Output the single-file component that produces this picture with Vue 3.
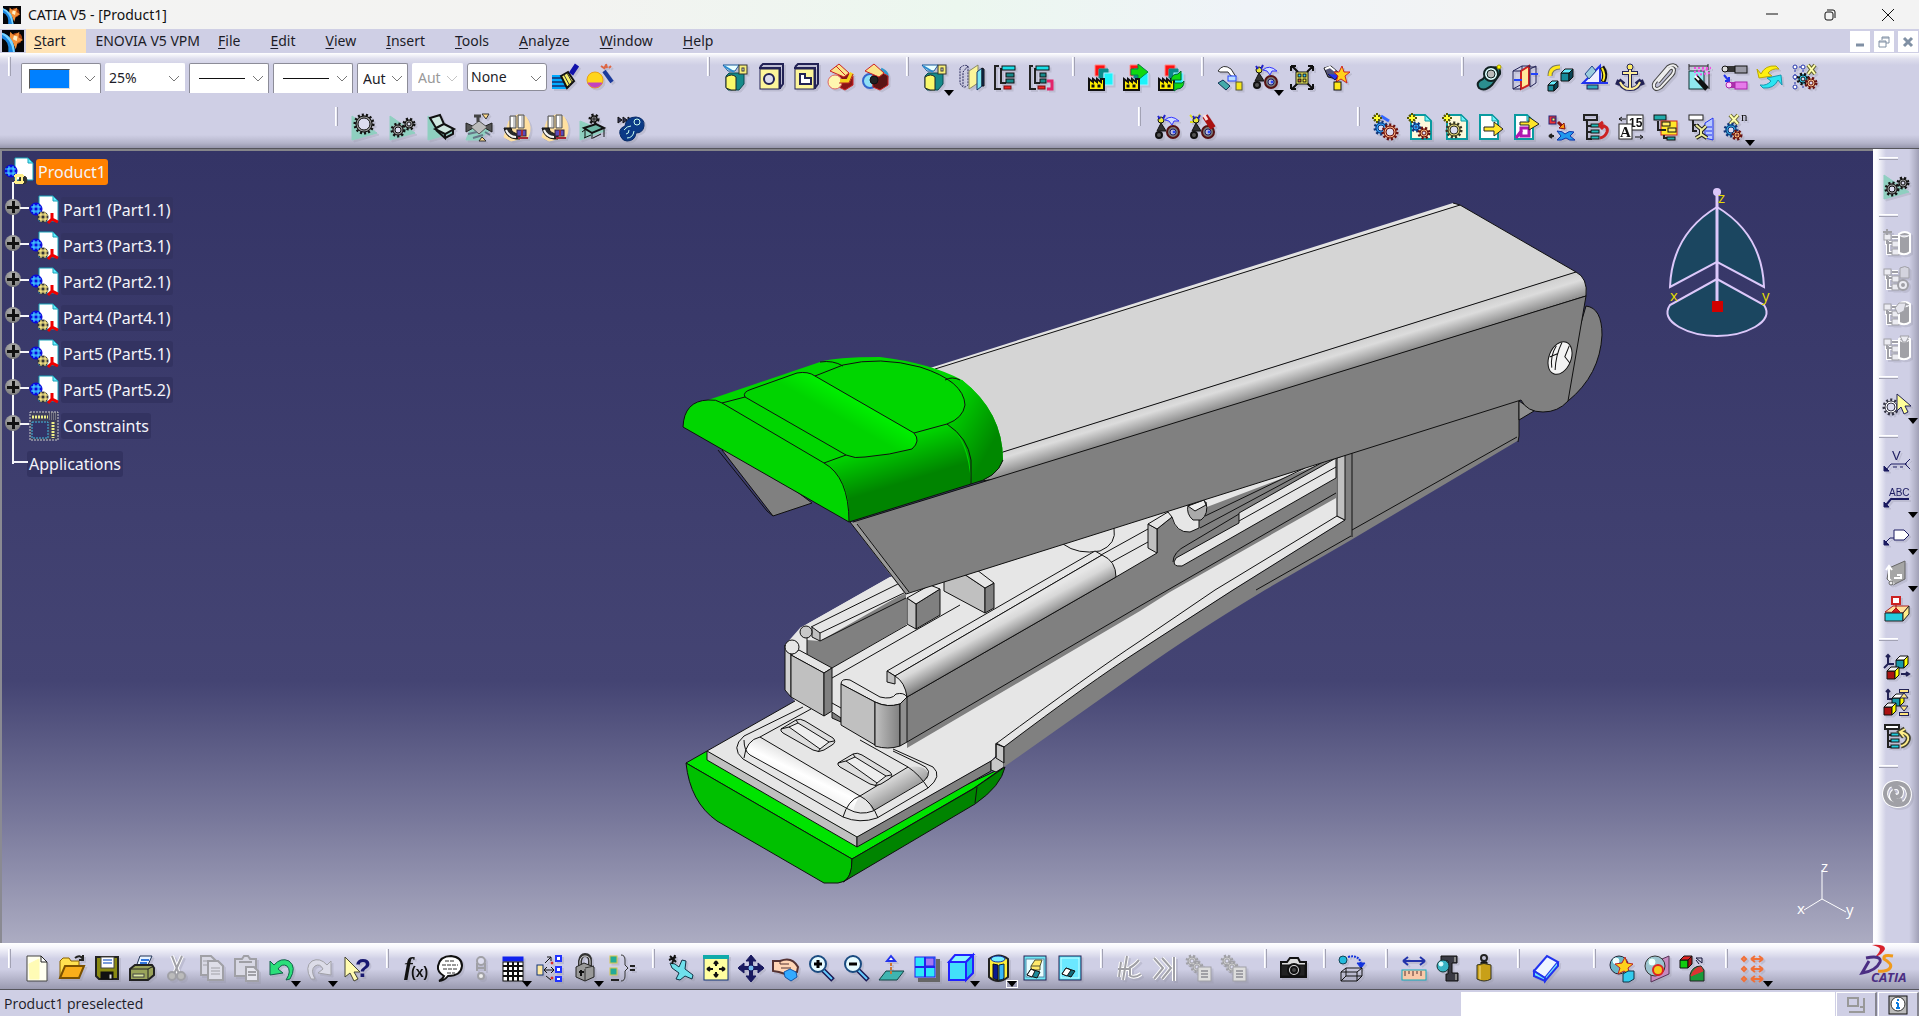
<script setup>
const P = (d, f = 'none', s = '#111', w = 1) => `<path d="${d}" fill="${f}" stroke="${s}" stroke-width="${w}"/>`
const R = (x, y, w, h, f, s = '#111') => `<rect x="${x}" y="${y}" width="${w}" height="${h}" fill="${f}" stroke="${s}"/>`
const C = (x, y, r, f, s = '#111', w = 1) => `<circle cx="${x}" cy="${y}" r="${r}" fill="${f}" stroke="${s}" stroke-width="${w}"/>`
const T = (x, y, t, size, f = '#111', extra = '') => `<text x="${x}" y="${y}" font-size="${size}" fill="${f}" ${extra}>${t}</text>`
const gear = (x, y, r, f, s = '#111') =>
  `<circle cx="${x}" cy="${y}" r="${r}" fill="${f}" stroke="${s}" stroke-width="3" stroke-dasharray="2 2"/>` +
  C(x, y, r - 1, f, s) + C(x, y, Math.max(1, r - 3), '#dcdcf0', s)
const page = (x, y, w, h, f = '#fff') =>
  P(`M${x} ${y}h${w - 6}l6 6v${h - 6}h${-w}z`, f, '#0a9aa0', 2) + P(`M${x + w - 6} ${y}v6h6z`, '#6ef0f8', '#0a9aa0')
const cube = (x, y, n, a, b, c) =>
  P(`M${x} ${y + 4}h${n}v${n}h${-n}z`, a) + P(`M${x} ${y + 4}l4 -4h${n}l-4 4z`, b) + P(`M${x + n} ${y + 4}l4 -4v${n}l-4 4z`, c)
const part = P('M4 13l3 -3h12l3 -4v15l-5 6h-11l-2 -3z', '#158a8a', '#0b4a50') + P('M4 14q6 -4 10 0v13q-5 1 -10 -2z', '#f8f86a', '#222') + P('M1 2h16l-4 6h-7z', '#eaffff', '#1a5a9a') + P('M2 3l10 6', 'none', '#2a8ad0', 2) + R(17, 2, 8, 9, '#f6ee7a', '#333') + R(20, 5, 2, 3, '#fff', '#333')
const robot = C(8, 7, 3, '#e8e838') + P('M5 3l2 3M12 2l-2 4', 'none', '#22c', 2) + P('M8 10l-4 8h9z', '#333') + C(6, 22, 3, '#555', '#111', 2) + C(20, 19, 6, '#777', '#511', 2) + C(20, 19, 3, '#bbd', '#226') + C(21, 19, 1, '#24f', '#24f')
const arm = P('M12 7q6 -6 14 1l-5 0l-2 4l-3 -4z', '#cfdcff', '#33f')
const factory = P('M2 27v-11l4 3v-3l4 3v-3l4 3v-3h3v11z', '#ffee00', '#111', 2) + R(5, 22, 2, 2, '#111') + R(11, 22, 2, 2, '#111')
const stack = P('M8 13v-11h10v4h-6v7z', '#f11', '#f88') + P('M12 15v-9h9v4h-5v5z', '#0a8a8a', '#0a8a8a') + R(17, 10, 9, 12, '#1df3fa', '#aef')
const teal = P('M1 3L26 20L1 27z', '#8fcfc0', '#8fcfc0')
const disc = '#a0a0a6'
const gboxLines = 'M4 10v4h6M9 8h6M9 16h3M5 12v12h6'
const gbox = P(gboxLines, 'none', '#fff', 4) + P(gboxLines, 'none', disc, 2) + R(1, 5, 7, 6, '#ececf2', disc) + R(9, 12, 7, 6, '#ececf2', disc) + R(9, 20, 7, 6, '#ececf2', disc)
const cyl = P('M16 5q6 -4 11 0v18q-5 4 -11 1z', disc, '#fff', 2) + P('M16 6q5 4 11 0', '#d4d4de', '#fff')
const mech = P('M7 3h6v12h-6zM15 2h6v13h-6z', '#c9c9c9', '#555') + P('M9 4v10M17 3v11', 'none', '#fff', 2) + P('M1 15q2 10 12 11h4v-5q-8 0 -9 -6z', '#2a2a2a', '#111') + P('M3 17q3 7 10 7', 'none', '#f4f4f4', 2) + R(14, 17, 9, 6, '#5a4bbb', '#323') + P('M15 25h10M19 17v6', 'none', '#a52834', 2)
const clay = P('M6 8Q14 -2 23 4Q30 14 25 24L8 28L1 24z', '#ffe0a0', '#ffe0a0')
const mag = s => P('M16 16l10 10', 'none', '#1a1a55', 5) + P('M16 16l9 9', 'none', '#6cf', 2) + C(11, 10, 8, '#e6fbff', '#1a4b80', 2) + P(s, 'none', '#000', 3)
const star = P('M5 0v10M0 5h10M2 2l6 6M8 2l-6 6', 'none', '#550', 2) + P('M5 2v6M2 5h6', 'none', '#ff3', 2)
const hooks = 'M3 15h11M6 8l-2 15M12 2l-4 24M14 14q5 -2 10 -8M14 21q5 4 12 -1M15 14v8'

const icons = {
  brush: P('M1 13h14M1 17h16M1 21h14M1 25h14', 'none', '#0af', 2) + P('M1 15h12M1 19h14M1 23h14', 'none', '#114b90', 2) + P('M10 13l7 -4l6 9l-7 7z', '#f4ee6a', '#111', 2) + P('M13 12l6 11M16 10l5 9', 'none', '#333') + P('M20 11l6 -9', 'none', '#11a', 5),
  wand: C(9, 17, 8, '#ffd51a', '#e8a018') + P('M2 20a8 8 0 0 0 14 0z', '#c343c0', '#c343c0') + P('M18 8l8 11', 'none', '#1b3a9c', 4) + P('M15 3l3 2M20 1l1 4M25 3l-2 2M18 6l2 -4', 'none', '#d64', 2),
  part, holes: R(3, 6, 19, 20, '#fdf59a', '#222255') + P('M2 5h21v21M3 4l3 -3h20v20l-3 4', 'none', '#222255', 2) + C(12, 16, 5, '#dde', '#225', 2),
  pocket: R(3, 6, 19, 20, '#fdf59a', '#222255') + P('M2 5h21v21M3 4l3 -3h20v20l-3 4', 'none', '#222255', 2) + P('M8 11h5v4h6v6h-11z', '#fff', '#225', 2),
  join: P('M10 13l9 -4l7 4v9l-8 5l-6 -3z', '#8a1515', '#c22') + C(8, 19, 7, '#fff7b0', '#d66') + P('M3 8l9 -7l10 9l-5 4z', '#fbe48a', '#c22') + P('M9 3l9 9', 'none', '#c22') + P('M13 18h8l4 -8', 'none', '#f5d21e', 4) + P('M12 20h10l4 -9', 'none', '#b22'),
  joinDark: C(8, 18, 7, '#8fe0f5', '#36c', 2) + P('M19 6q9 4 5 12', 'none', '#39c', 3) + P('M10 13l9 -4l7 4v9l-8 5l-7 -3z', '#5a1515', '#c22') + P('M3 8l9 -7l10 9l-5 4z', '#fbe48a', '#c22') + C(12, 17, 4, '#222'),
  mirror: P('M2 5q4 -4 8 -2v19q-5 5 -8 -2zM10 3l-5 6v14', 'none', '#225', '1" stroke-dasharray="2 1') + P('M11 8l9 -6v18l-9 6z', '#fbf59a', '#886') + P('M19 9l5 -4v18l-5 4z', '#7fe6f2', '#136') + P('M24 5l2 1v17l-2 0z', '#136'),
  tree: P('M6 3h-4v23h6M8 5v15h5', 'none', '#222', 2) + R(9, 3, 13, 4, '#1ae0ea') + R(13, 10, 8, 4, '#168a8a') + R(13, 16, 8, 4, '#168a8a') + R(11, 23, 7, 3, '#e22', '#711'),
  treeRed: P('M5 3h-3v23h6M7 5v15h5', 'none', '#222', 2) + R(8, 3, 13, 4, '#1ae0ea') + R(12, 10, 6, 4, '#168a8a') + R(12, 16, 6, 4, '#168a8a') + R(10, 23, 7, 3, '#e22', '#711') + P('M19 18h5v8h-5', 'none', '#e3246a', 3),
  fab: stack + factory, fabArrow: stack + P('M9 6h7v-5l10 8l-10 8v-5h-7z', '#10d810', '#084') + factory,
  fabSync: stack + factory + P('M14 18q0 -7 7 -7l3 -3v9h-8zM27 18q0 8 -7 8l-3 2v-8h8z', '#12d812', '#063'),
  copyPart: P('M2 8q5 -8 13 -2l5 8l-5 -1l-3 -4l-8 0z', '#fff', '#333') + R(12, 13, 8, 5, '#bdf', '#24f') + P('M2 20l5 -3l7 6l-4 4z', '#4aa', '#135') + R(20, 19, 6, 8, '#f5e71a', '#553'),
  robot: arm + robot, explode: P('M4 3l6 6M25 3l-6 6M4 26l6 -6M25 26l-6 -6M3 3h5M3 3v5M25 3h-5M25 3v5M3 26h5M3 26v-5M25 26h-5M25 26v-5', 'none', '#111', 2) + R(8, 9, 12, 12, '#ff6', '#111') + R(10, 11, 3, 3, '#3cf') + R(15, 11, 3, 3, '#3cf') + R(10, 16, 3, 3, '#c63') + R(15, 16, 3, 3, '#fe3'),
  sparkPart: P('M1 5l7 -2l9 8l-3 5l-9 -2z', '#555577', '#111') + P('M2 6l5 -2l5 4', 'none', '#fff', 2) + P('M5 11l7 6l4 -5', '#23e', '#115') + P('M19 3l2 6h6l-5 4l2 7l-6 -4l-5 3l2 -6l-4 -4h5z', '#ffd21a', '#c22') + R(11, 19, 7, 8, '#ffe81a'),
  coincid: P('M3 25q-4 -6 4 -9l9 -11q9 -3 8 6l-8 11q-7 7 -13 3z', '#2b8f8f', '#122', 2) + C(15, 11, 7, '#dff', '#122', 2) + C(15, 11, 4, '#bbb', '#122') + C(23, 4, 2, '#ff0', '#a90'),
  contact: P('M2 8l9 -5v18l-9 5z', 'none', '#225') + P('M10 8l8 -5v19l-8 4z', '#ffe89a', '#c22', 2) + P('M19 6l6 -3v17l-6 4zM2 8h8M11 3h9M18 4h7M2 26h8', 'none', '#225') + P('M3 17h8M20 11h7', 'none', '#24f', 2),
  offset: cube(15, 6, 8, '#168a9a', '#6ef', '#0a4455') + cube(2, 18, 6, '#168a9a', '#6ef', '#0a4455') + P('M4 13q0 -9 10 -9', 'none', '#776', 5) + P('M4 13q0 -9 10 -9', 'none', '#ffe81a', 3),
  angle: P('M2 20L19 3v17z', '#eef', '#23e', 2) + P('M4 11l7 -8l4 5l-7 8z', '#9cd', '#248') + R(6, 22, 11, 4, '#3ab', '#225') + P('M21 4q5 7 1 15', 'none', '#111', 5) + P('M21 5q4 7 1 13', 'none', '#fe2', 2) + P('M1 20h26', 'none', '#23e', 2),
  anchor: C(14, 4, 3, '#fe6', '#225') + P('M14 7v18M6 10h16M3 17q2 9 11 9q9 0 11 -9M3 17l-2 5M3 17l5 4M25 17l2 5M25 17l-5 4', 'none', '#225', 4) + P('M14 7v18M7 10h14M4 19q3 7 10 7q7 0 10 -7', 'none', '#fe9', 2),
  clip: P('M7 19L18 6q4 -3 5 1q0 3 -2 5L10 24q-5 4 -7 0q-1 -3 2 -6L17 4q6 -4 9 1', 'none', '#444', 4) + P('M7 19L18 6q4 -3 5 1q0 3 -2 5L10 24q-5 4 -7 0q-1 -3 2 -6L17 4q6 -4 9 1', 'none', '#eee', 2),
  quick: P('M3 3h19M3 1v6M22 1v6M23 8v18', 'none', '#222') + R(3, 8, 15, 18, '#8fe8f0', '#133') + P('M8 9l16 -3M10 12l14 -2M8 5h17', 'none', '#f050e0', '2" stroke-dasharray="2 2') + P('M10 14l11 12', 'none', '#111', 5) + P('M9 13l4 4', 'none', '#fff', 2),
  flexible: P('M4 6h20', 'none', '#333', 6) + R(14, 3, 12, 7, '#9a9aa6') + C(4, 6, 3, '#ddd') + P('M3 12l5 6M8 14v4h-4', 'none', '#23e', 2) + P('M9 22h16', 'none', '#a3a', 6) + R(14, 19, 12, 7, '#e67aea', '#a2a') + C(8, 22, 3, '#fcf', '#a2a'),
  change: P('M5 11q4 -9 15 -8l3 3q-7 -1 -11 4l4 3l-13 2l-2 -9z', '#fff010', '#b9a800') + P('M22 17q-4 9 -15 8l-3 -3q7 1 11 -4l-4 -3l14 -3l1 10z', '#2be6f2', '#1597b0'),
  reuse: `<path d="M4 3v22M12 3v22M4 4h8M4 14h8" stroke="#23a" stroke-dasharray="2 2"/>` + C(4, 4, 2, '#fff', '#23a') + C(12, 4, 2, '#fff', '#23a') + C(4, 14, 2, '#fff', '#23a') + C(4, 24, 2, '#fff', '#23a') + P('M17 2l7 9M24 2l-7 9', 'none', '#663', 4) + P('M17 2l7 9M24 2l-7 9', 'none', '#ffa', 2) + gear(12, 16, 5, '#3ce') + gear(20, 20, 5, '#f9c890', '#611'),
  gear1: teal + gear(13, 11, 9, '#999'), gear2: teal + gear(9, 17, 6, '#999') + gear(20, 11, 5, '#999'),
  chair: teal + P('M3 5l10 -3l4 9l-8 4zM8 16l9 -5l10 5l-9 5z', '#cfe8e0', '#111', 2) + P('M9 17l9 8v-5M18 25l8 -4v-4', 'none', '#111', 2),
  valve: P('M6 14l20 2L14 27H1z', '#8fcfc0', '#8fcfc0') + P('M1 10v9l9 -5zM27 10v9l-9 -5z', '#555', '#222') + P('M6 14l8 -6l8 6l-8 7z', '#bbb', '#555') + P('M13 9v-6h-4M13 3h3', 'none', '#444', 3) + P('M17 1h7l-3 5zM14 28l3 -4l4 4z', '#ffd98a', '#333') + P('M3 21l9 -2M8 25l10 -3M20 19l5 3', 'none', '#678', 2),
  simA: clay + mech, simB: clay + mech,
  bench: P('M1 8L26 18L1 27z', '#8fcfc0', '#8fcfc0') + P('M5 15l12 -4l8 4l-12 5z', '#6db8a6', '#111', 2) + P('M6 16v9M13 20v6M25 15v9M5 25l7 -3M14 25l8 -4M3 19l4 -3', 'none', '#111') + gear(15, 6, 4, '#777'),
  fish: P('M1 4l4 3l-4 3zM6 4l4 3l-4 3zM11 4l4 3l-4 3z', '#335') + P('M4 24q-4 -8 4 -11q1 -9 11 -9q9 1 8 9q-1 7 -8 7q-1 8 -9 8q-4 0 -6 -4z', '#0b3a86', '#072a66') + C(20, 9, 3, '#0b3a86', '#cfe') + P('M7 17q3 -4 7 -4M17 18q-1 7 -7 7M12 17q0 4 -3 4', 'none', '#cfe', 1),
  robotX: P('M2 2l3 3M2 9h4M12 1l-2 3', 'none', '#dd2', 2) + robot + P('M17 3l8 12', 'none', '#a11', 6) + P('M16 2l3 5', 'none', '#fdd', 3),
  addGear: P('M9 3l8 5', 'none', '#36f', 3) + gear(9, 15, 6, '#3af', '#137') + gear(18, 19, 7, '#f9a878', '#611') + star,
  newPage: page(4, 2, 20, 24, '#fdf9dc') + gear(9, 14, 4, '#3af', '#137') + gear(17, 20, 5, '#f9b878', '#611') + star,
  gearPage: page(5, 2, 20, 24, '#fdf9dc') + gear(12, 17, 7, '#d8cc70', '#332') + star,
  pageArrow: page(3, 2, 18, 24) + P('M7 14h10v-5l9 7l-9 7v-5h-10z', '#ffe62a', '#222'),
  pagePin: page(3, 2, 18, 24) + P('M4 25l6 -8M9 15v8h8v-8z', 'none', '#b018b0', 3) + P('M8 9h9v-5l10 7l-10 6v-5h-9z', '#ffe62a', '#222'),
  replace: R(2, 3, 7, 8, '#e33', '#227') + R(5, 5, 3, 3, '#ff6', '#227') + P('M11 9l6 6', 'none', '#811', 3) + P('M18 16l-6 -1l5 -5z', '#f91', '#811') + P('M10 18q6 0 8 3q4 -4 9 -2l-4 4l5 4q-6 1 -9 -2q-5 3 -9 2l4 -4z', '#29e', '#13a') + P('M2 23h5M2 23l3 -2M2 23l3 2', 'none', '#222', 2),
  reorder: P('M2 2h13v5h-13zM5 7v19h5M5 13h5M5 19h5', 'none', '#222', 2) + R(9, 11, 8, 3, '#2bb') + R(9, 17, 8, 3, '#2bb') + R(9, 23, 8, 3, '#2bb') + P('M18 12q9 1 7 7q-2 5 -7 6M17 12l4 -3M17 12l4 4', 'none', '#c22', 3),
  number: R(10, 2, 16, 15, '#fff', '#222') + T(12, 14, '15', 12, '#111', 'font-weight="700"') + R(2, 11, 13, 15, '#fff', '#222') + T(3, 24, 'A', 15, '#111', 'font-family="Liberation Serif, serif" font-weight="700"') + P('M2 6h7M5 4l-3 2l3 2M18 24h7M23 22l3 2l-3 2', 'none', '#111', 1),
  graphTree: R(2, 2, 12, 5, '#2aa') + R(9, 8, 16, 14, '#ffe82a', '#c22') + P('M6 8v9h8M12 22v3h4', 'none', '#222', 2) + R(10, 9, 8, 4, '#fe6') + R(16, 15, 8, 4, '#fe6') + R(15, 24, 8, 3, '#2aa'),
  manage: P('M18 10l8 -5v22l-8 -2z', '#b7c8ff', '#23e') + P('M19 14h6M19 18h6M19 22h6', 'none', '#23e') + R(2, 2, 14, 5, '#fff', '#222') + P('M6 7v11h4M6 12h6', 'none', '#222', 2) + P('M9 12l6 5l4 -4M14 16v6l-5 3M14 21l6 4', 'none', '#222', 4) + P('M9 12l6 5l4 -4M14 16v6l-5 3M14 21l6 4', 'none', '#ee9', 2),
  xn: P('M8 2l8 9M16 2l-8 9', 'none', '#663', 4) + P('M8 2l8 9M16 2l-8 9', 'none', '#ffa', 2) + T(19, 8, 'n', 13, '#111', 'font-family="Liberation Serif, serif"') + gear(9, 17, 6, '#3ad', '#137') + gear(15, 22, 4, '#f9b878', '#611'),
  newFile: P('M4 2h14l6 6v19h-20z', '#fffff0', '#444') + P('M18 2v6h6z', '#fff', '#222') + P('M6 10l10 -5v20h-9z', '#fffbb5', '#fffbb5'),
  open: P('M2 24v-17l3 -3h6l2 3h8v4', '#ffe050', '#8a6000') + P('M2 24l5 -12h19l-5 12z', '#f9ae1a', '#7a5000', 2) + P('M17 4q5 -4 8 1M25 1v5h-4', 'none', '#222', 2),
  save: P('M3 3h22v22h-19l-3 -3z', '#8a8a12', '#222', 2) + R(8, 3, 13, 11, '#fff', '#444') + P('M10 6h9M10 9h9', 'none', '#7a9cdc', 2) + R(8, 18, 12, 7, '#111') + R(16, 20, 3, 5, '#ddd'),
  print: P('M8 13l4 -11h12l-5 11z', '#e6f2ff', '#235') + P('M13 6h8M12 9h7', 'none', '#37d', 2) + P('M2 15l5 -4h17l2 3v7l-6 5h-18z', '#9aa35a', '#222', 2) + P('M2 15h18v10M20 15l6 -3', 'none', '#222') + R(5, 20, 11, 3, '#dde8a0', '#444'),
  cut: P('M9 2l7 18M19 2l-8 18', 'none', '#fff', 4) + P('M9 2l7 18M19 2l-8 18', 'none', disc, 2) + C(9, 22, 4, '#bbb', disc, 2) + C(18, 22, 4, '#bbb', disc, 2),
  copy: P('M3 2h10l5 5v14h-15z', '#d8d8e4', disc, 2) + P('M10 7h10l5 5v14h-15z', '#dedee8', disc, 2) + P('M13 14h9M13 17h9M13 20h9M5 7h6M5 11h5', 'none', disc),
  paste: P('M2 5h7l2 -3h4l2 3h6v17h-21z', '#d8d8e4', disc, 2) + P('M13 13h8l4 4v10h-12z', '#e6e6ee', disc, 2) + P('M15 18h8M15 21h8M6 8h13', 'none', disc, 2),
  undo: P('M2 21V7l4 4q7 -8 15 -4q8 6 1 18l-4 1q6 -9 1 -14q-5 -3 -9 3l5 4z', '#2adf7a', '#13604a'),
  redo: P('M26 21V7l-4 4q-7 -8 -15 -4q-8 6 -1 18h4q-5 -9 0 -13q5 -3 8 3l-5 4z', '#dcdce8', disc),
  help: P('M3 3v20l5 -4l4 8l4 -2l-4 -7h6z', '#fffbb0', '#443') + T(13, 23, '?', 26, '#181870', 'font-weight="700"'),
  fx: T(3, 21, 'f', 26, '#111', 'font-family="Liberation Serif, serif" font-style="italic" font-weight="700"') + T(10, 23, '(x)', 14, '#111', 'font-weight="700"'),
  talk: P('M8 22q-7 -4 -6 -10q2 -10 13 -10q11 1 11 10q-1 10 -14 10q-4 5 -9 5q3 -1 5 -5z', '#fff', '#111', 2) + P('M9 7h10M6 11h16M7 15h14M11 19h8', 'none', '#333', '1" stroke-dasharray="4 1'),
  link: C(14, 7, 4, '#dde', disc, 2) + P('M10 9v8M18 9v8M10 14h8', 'none', disc, 2) + C(14, 22, 3, '#eee', disc, 2),
  table: R(4, 3, 20, 4, '#12e', '#12e') + R(4, 8, 20, 19, '#fff') + P('M4 12h20M4 17h20M4 22h20M9 8v19M14 8v19M19 8v19', 'none', '#111', 2),
  config: R(1, 11, 6, 10, '#ffe9a0', '#137') + P('M8 16h10M8 16l3 -3M8 16l3 3M18 16l-3 -3M18 16l-3 3M9 9l6 -6M15 3h-4M15 3v4M10 22l5 4', 'none', '#111', 1) + P('M20 2h5v5h-5zM20 13h5v5h-5zM20 23h5v4h-5z', '#fff', '#23f', 2) + C(16, 9, 1, '#d22', '#d22') + C(16, 24, 1, '#d22', '#d22'),
  lock: P('M9 12v-5q1 -6 5 -6q5 0 5 6v5', 'none', '#333', 4) + P('M9 12v-5q1 -5 5 -5q5 0 5 5v5', 'none', '#ddd', 1) + P('M5 13l8 -4l10 4v10l-9 4l-9 -4z', '#999', '#222') + P('M14 27v-12M14 14l9 -2', 'none', '#333') + P('M8 18h5M10 16v6', 'none', '#111', 2),
  equiv: R(2, 2, 7, 7, '#2a9', '#d6c84a') + R(2, 14, 7, 7, '#2a9', '#d6c84a') + P('M13 1q4 0 4 5v5l3 3l-3 3v5q0 5 -4 5', 'none', '#333') + P('M22 12h5M22 16h5M3 26h8', 'none', '#222', 2),
  plane: P('M3 9l5 1l4 3l3 -7l4 1l-1 8l8 6l-1 4l-7 -3l-5 4l-4 -1l3 -6l-7 -5z', '#6fe0ec', '#134') + P('M2 6l7 -3M3 2l6 6M8 1l-3 9', 'none', '#111', 2),
  fit: R(2, 3, 24, 23, '#ffffa0', '#137') + P('M1 3h26', 'none', '#1aa', 4) + P('M14 7v5M14 18v5M5 15h6M17 15h6M14 7l-2 3M14 7l2 3M14 23l-2 -3M14 23l2 -3M5 15l3 -2M5 15l3 2M23 15l-3 -2M23 15l-3 2', 'none', '#111', 2),
  pan: P('M14 3v23M2 14h24', 'none', '#1a1a60', 4) + P('M14 1l5 6h-10zM14 28l5 -6h-10zM1 14l6 -5v10zM27 14l-6 -5v10z', '#1a1a60', '#1a1a60') + C(14, 14, 3, '#7be', '#1a1a60'),
  rotate: P('M1 7h7q12 -5 18 6l-1 5l-9 3l-9 -3l-6 -1z', '#ffd5b5', '#533', 2) + P('M8 10h9M9 14h10M8 6v4', 'none', '#533') + P('M12 18l6 -3l6 3l1 5l-6 4l-6 -4z', '#3af', '#15a'),
  zoomIn: mag('M7 10h8M11 6v8'), zoomOut: mag('M7 10h8'),
  normal: P('M2 26l7 -9h18l-7 9z', '#3fb5b0', '#144') + P('M14 20v-13', 'none', '#c73', '2" stroke-dasharray="3 1') + P('M14 2l4 5h-8z', '#fff', '#23e', 2),
  multi: P('M6 26h20v-21', 'none', '#666', 4) + R(3, 3, 20, 20, '#2ee8fa', '#22e') + R(13, 4, 9, 8, '#a47af0', '#22e') + P('M13 3v20M3 13h20', 'none', '#22e', 2),
  iso: P('M2 8h17v18h-17z', '#42e0fa', '#22f', 2) + P('M2 8l6 -7h18l-7 7z', '#8af4ff', '#22f', 2) + P('M19 8l7 -7v18l-7 7z', '#20bde8', '#22f', 2),
  shading: P('M5 5v18q9 8 19 0v-18q-9 -7 -19 0z', '#ffee3a', '#222', 2) + P('M9 10v14q3 2 5 2v-15z', '#0a1a90', '#111') + P('M15 11v15q4 0 5 -2v-14z', '#38b8f8', '#024') + '<ellipse cx="14" cy="5" rx="7" ry="3" fill="#7ef" stroke="#13a"/>',
  hide: R(3, 2, 22, 24, '#6fe9f5', '#225') + R(5, 5, 18, 18, '#e8ffff', '#58a') + P('M10 12l4 -6h7l-2 6zM10 12v4h9v-4', '#ffe96a', '#553') + P('M6 21l4 -6l9 3l-3 6z', '#1b8a9a', '#111') + P('M6 21l4 -6l4 2l-3 6z', '#fff', '#111'),
  swap: R(3, 2, 22, 24, '#52e3fa', '#225') + R(5, 4, 18, 20, '#6be8ff', '#cff') + P('M6 20l4 -6l9 3l-4 6z', '#136a7a', '#111') + P('M6 20l4 -6l5 2l-4 6z', '#fff', '#111'),
  dis1: P(hooks, 'none', '#fff', 4) + P(hooks, 'none', disc, 2),
  dis2: P('M4 4l9 10l-9 11M12 4l9 10l-9 11M24 3v24', 'none', '#fff', 4) + P('M4 4l9 10l-9 11M12 4l9 10l-9 11M24 3v24', 'none', disc, 2),
  dis3: gear(7, 7, 5, '#ccc', disc) + gear(12, 13, 5, '#ccc', disc) + R(13, 13, 13, 14, '#ddd', disc) + P('M16 17h7M16 20h7M16 23h7', 'none', disc, 2),
  camera: P('M2 8h6l3 -4h8l2 4h6v15h-25z', '#ddd', '#111', 2) + R(2, 11, 24, 11, '#222') + C(15, 16, 6, '#ddd', '#111', 2) + C(15, 16, 3, '#444', '#111', 2),
  orbit: C(5, 6, 4, '#2bd', '#145') + P('M10 3q12 -3 13 8', 'none', '#13d', '2" stroke-dasharray="2 1') + P('M19 9h8l-4 5z', '#13d', '#13d') + P('M3 18l5 -4h16v8l-5 5h-16zM3 18h16v9M19 18l5 -4M8 14v8h16M8 22l-5 5', 'none', '#111', 1),
  measure: P('M3 7h22M3 7l5 -4M3 7l5 4M25 7l-5 -4M25 7l-5 4', 'none', '#23a', 2) + R(2, 16, 24, 10, '#f9c9a8', '#1ab') + P('M5 17v5M9 17v3M13 17v5M17 17v3M21 17v5', 'none', '#533', 1),
  caliper: P('M6 2h16v7h-5v10h6v8h-12v-7h2v-13h-7z', '#3a3a44', '#111') + P('M20 3v5M21 20v6', 'none', '#888', 2) + C(8, 12, 6, '#37b4c4', '#133') + C(6, 10, 2, '#dff', '#dff'),
  weight: C(14, 4, 3, 'none', '#222', 2) + P('M11 8h6v3h-6z', '#222') + P('M7 11q7 -3 14 0v14q-7 4 -14 0z', '#c8a018', '#332', 1) + P('M10 12v13', 'none', '#e0c050', 2),
  eraser: P('M2 17L15 2l11 6L13 24z', '#eef6ff', '#23e', 2) + P('M2 17v5l11 5v-3zM13 24v3L26 12v-4', '#6fe8f8', '#23e', 2),
  ballSpark: C(11, 11, 9, '#6bb8c8', '#223') + C(8, 7, 3, '#eff', '#eff') + P('M17 3l2 6l6 1l-5 4l2 7l-6 -4l-6 3l2 -6l-5 -4l7 -1z', '#ffd21a', '#b22') + P('M15 20l5 -3h6v8l-5 3h-6z', '#3ce', '#134'),
  ballPlane: P('M12 8l14 -6v18l-18 8v-8z', '#c78ac0', '#535') + C(12, 12, 10, '#9cc4d0', '#333') + C(9, 8, 4, '#eff', '#9cc') + C(15, 16, 5, '#f5c81a', '#d22', 2),
  cubes: cube(2, 2, 8, '#1c1', '#d22', '#a11') + P('M18 4h6v5M24 9l-6 -5M18 6l3 4', 'none', '#113', 1) + P('M12 27v-6q2 -9 11 -9l3 4v11z', '#1a9a3a', '#222') + P('M13 22q3 -9 10 -9l2 4z', '#d33', '#d33'),
  pattern: [5, 15, 25].map(y => P(`M2 ${y}l2 -2l2 2l-2 2zM11 ${y}h12M11 ${y}l4 -3M11 ${y}l4 3M23 ${y}l-4 -3M23 ${y}l-4 3`, 'none', '#f07038', 2)).join(''),
  tree1: gbox + cyl + P('M4 0v6M0 3h9', 'none', disc, 2), tree2: gbox + P('M17 4q5 -3 9 0v10h-9z', '#d4d4de', disc) + C(20, 21, 5, '#ececf2', disc, 2) + C(20, 21, 1, disc, disc, 2),
  tree3: gbox + cyl + P('M12 9l4 -5h7l-2 8l-6 3z', '#e4e4ec', disc), tree4: gbox + cyl + P('M17 2h9l-3 6h-3z', '#ececf2', disc),
  select: gear(8, 16, 7, '#fff', '#334') + P('M14 3v17l4 -4l3 7l4 -2l-3 -6h6z', '#ffff9a', '#225'),
  weld: T(9, 10, 'V', 13, '#1a1a60') + P('M3 20l5 -6h16M10 17h4M17 17h3M27 9l-5 5l5 5', 'none', '#1a1a60') + P('M1 16v5h5z', '#1a1a60', '#1a1a60'),
  abc: T(6, 11, 'ABC', 10, '#1a1a60') + P('M3 20l5 -6h18', 'none', '#1a1a60', 2) + P('M1 17v5h5z', '#1a1a60', '#1a1a60'),
  flag: P('M11 8h10l5 5l-5 5h-10z', '#fff', '#1a1a60') + P('M3 20l4 -4h4', 'none', '#1a1a60') + P('M1 18v5h5z', '#1a1a60', '#1a1a60'),
  view3d: P('M6 9l16 -7v18l-12 6l-6 -6z', '#a6a6a6', '#666') + P('M6 8v12l5 5M3 11l3 -4l3 4M11 19h7M14 16h4v4', 'none', '#fff', 2) + C(8, 24, 2, '#eee', '#666'),
  block: P('M2 16l8 -6h16l-6 7z', '#ffdf9a', '#a22') + P('M2 17h18v8h-18z', '#2cd', '#222') + P('M20 17l6 -7v8l-6 7z', '#fe8', '#222') + P('M9 1h8v7h-8z', '#fff', '#c22', 2) + P('M13 9v3l-4 4h8l-4 -4', '#c22', '#a11'),
  axisCube: P('M5 2v9h6M5 11l-4 4M3 4l2 -2l2 2', 'none', '#225', 2) + cube(13, 3, 8, '#1899a8', '#fff', '#ff0') + cube(4, 14, 8, '#a11', '#eee', '#ff0') + P('M18 21h7M23 19l3 2l-3 2', 'none', '#225', 2),
  stackCube: P('M5 2v9h6M3 4l2 -2l2 2', 'none', '#225', 2) + cube(9, 6, 8, '#1899a8', '#fff', '#ff0') + cube(1, 15, 8, '#a11', '#eee', '#ff0') + P('M16 3h10M16 26h10', 'none', '#225', 4) + P('M17 3h8M17 26h8', 'none', '#ffe680', 2) + P('M21 5l4 5h-8zM21 23l4 -5h-8z', '#ffe680', '#225'),
  reorder2: P('M2 2h14v4h-14z', '#fff', '#222', 2) + P('M5 6v18h5M5 12h5M5 18h5', 'none', '#222', 2) + R(8, 10, 8, 3, '#2cd') + R(8, 16, 8, 3, '#2cd') + R(8, 22, 8, 3, '#2cd') + P('M18 9q9 3 7 8q-2 5 -7 6M22 6l-5 3l4 5', 'none', '#443', 5) + P('M18 9q9 3 7 8q-2 5 -7 6M22 6l-5 3l4 5', 'none', '#fe8', 2),
  spiral: P('M9 8q8 -3 9 4q0 5 -5 5q-3 -1 -2 -4M2 15q0 -12 12 -12q11 1 12 11M19 20q-9 3 -10 -4q0 -3 3 -5M26 13q0 12 -12 12q-11 -1 -12 -11', 'none', '#fff', 6) + P('M9 8q8 -3 9 4q0 5 -5 5q-3 -1 -2 -4M2 15q0 -12 12 -12q11 1 12 11M19 20q-9 3 -10 -4q0 -3 3 -5M26 13q0 12 -12 12q-11 -1 -12 -11', 'none', disc, 4)
}

const topGroups = [
  { items: ['part', 'holes', 'pocket', 'join', 'joinDark'], cls: 'lead' },
  { items: ['part+', 'mirror', 'tree', 'treeRed'] },
  { items: ['fab', 'fabArrow', 'fabSync'] },
  { items: ['copyPart', 'robot+', 'explode', 'sparkPart'] },
  { items: ['coincid', 'contact', 'offset', 'angle', 'anchor', 'clip', 'quick', 'flexible', 'change', 'reuse'], cls: 'constraints' }
]
const secondGroups = [
  { items: ['gear1', 'gear2', 'chair', 'valve', 'simA', 'simB', 'bench', 'fish'], cls: 'workbenches' },
  { items: ['robot', 'robotX'], cls: 'simulate' },
  { items: ['addGear', 'newPage', 'gearPage', 'pageArrow', 'pagePin', 'replace', 'reorder', 'number', 'graphTree', 'manage', 'xn+'], cls: 'structure' }
]
const bottomGroups = [
  { items: ['newFile', 'open', 'save', 'print', 'cut', 'copy', 'paste', 'undo+', 'redo+', 'help'], cls: 'first' },
  { items: ['fx', 'talk', 'link', 'table+', 'config', 'lock+', 'equiv'] },
  { items: ['plane', 'fit', 'pan', 'rotate', 'zoomIn', 'zoomOut', 'normal', 'multi', 'iso+', 'shading+', 'hide', 'swap'] },
  { items: ['dis1', 'dis2', 'dis3', 'dis3'] },
  { items: ['camera'] },
  { items: ['orbit'] },
  { items: ['measure', 'caliper', 'weight'], cls: 'loose' },
  { items: ['eraser'], cls: 'loose' },
  { items: ['ballSpark', 'ballPlane', 'cubes'], cls: 'far' },
  { items: ['pattern+'], cls: 'loose' }
]
const sideGroups = [
  ['gear2'], ['tree1', 'tree2', 'tree3', 'tree4'], ['select+'],
  ['weld', 'abc+', 'flag+', 'view3d+', 'block'], ['axisCube', 'stackCube', 'reorder2'], ['spiral']
]
const key = n => n.replace('+', '')
const menus = ['File', 'Edit', 'View', 'Insert', 'Tools', 'Analyze', 'Window', 'Help']
const parts = ['Part1 (Part1.1)', 'Part3 (Part3.1)', 'Part2 (Part2.1)', 'Part4 (Part4.1)', 'Part5 (Part5.1)', 'Part5 (Part5.2)']
const appIcon = '<rect width="24" height="24" fill="#050508"/><circle cx="16" cy="9" r="6" fill="#a8400c"/><path d="M9 2l4 4l6 -4l-1 6l5 3l-6 3l-2 7l-3 -7l-4 -4z" fill="#f59038"/><path d="M13 6l4 1l-1 5l-4 -2z" fill="#fff0c8"/><path d="M0 3Q13 7 14 24H7Q8 12 0 9z" fill="#1a86e0"/><path d="M0 3Q13 7 14 24H12Q10 10 0 5z" fill="#7ad4ff"/>'
const blueCog = C(7, 14, 6, '#0808e0', '#0808e0') + P('M4 11h6v6h-6zM2 12h10M2 16h10M5 9v10M9 9v10', 'none', '#4cf')
const partIcon = P('M10 1h14l5 5v20h-19z', '#fff', '#19a3b8') + P('M24 1v5h5z', '#6ef', '#19a3b8') + blueCog + P('M19 28l4 -4v-6v6l6 3', 'none', '#e00', 3) + C(14, 22, 5, '#333', '#333') + P('M11 19h6v6h-6zM9 20h10M9 24h10M12 17v10M16 17v10', 'none', '#fe8')
const rootIcon = P('M11 1h13l5 5v17h-18z', '#fff', '#19a3b8') + P('M24 1v5h5z', '#6ef', '#19a3b8') + C(7, 14, 6, '#0808e0', '#0808e0') + P('M4 11h6v6h-6zM1 12h11M1 16h11M5 9v10M9 9v10', 'none', '#4cf') + C(19, 23, 4, '#333', '#333') + P('M12 18h6v8h-6zM10 19h10M10 25h10', 'none', '#fe8', 2)
</script>

<template>
  <div class="app">
    <header class="titlebar">
      <svg class="app-icon" viewBox="0 0 24 24" v-html="appIcon"></svg>
      <h1>CATIA V5 - [Product1]</h1>
      <div class="window-buttons">
        <button aria-label="Minimize"><svg viewBox="0 0 12 12"><path d="M0 5h12" /></svg></button>
        <button aria-label="Restore"><svg viewBox="0 0 12 12"><rect x="1" y="3" width="8" height="8" rx="2" /><path d="M3 1h6q2 0 2 2v6" /></svg></button>
        <button aria-label="Close"><svg viewBox="0 0 12 12"><path d="M0 0l12 12M12 0L0 12" /></svg></button>
      </div>
    </header>

    <nav class="menubar">
      <svg class="doc-icon" viewBox="0 0 24 24" v-html="appIcon"></svg>
      <button class="start"><u>S</u>tart</button>
      <button class="vpm">ENOVIA V5 VPM</button>
      <button v-for="m in menus" :key="m"><u>{{ m[0] }}</u>{{ m.slice(1) }}</button>
      <div class="doc-buttons">
        <button aria-label="Minimize document"><svg viewBox="0 0 12 12"><path d="M2 9h8" stroke-width="3" /></svg></button>
        <button aria-label="Restore document"><svg viewBox="0 0 12 12"><path d="M4 4V1h7v6H8M4 2h7M1 5h7v6H1zM1 6h7" /></svg></button>
        <button aria-label="Close document"><svg viewBox="0 0 12 12"><path d="M2 2l8 8M10 2l-8 8" stroke-width="3" /></svg></button>
      </div>
    </nav>

    <section class="toolbars">
      <div class="row">
        <i class="grip"></i>
        <div class="combos">
          <label class="combo wide"><span class="swatch"></span><select aria-label="Fill colour"><option></option></select><svg viewBox="0 0 10 6"><path d="M0 0l5 5l5 -5" /></svg></label>
          <label class="combo wide flat"><select aria-label="Transparency"><option>25%</option></select><svg viewBox="0 0 10 6"><path d="M0 0l5 5l5 -5" /></svg></label>
          <label v-for="n in ['Line weight', 'Line type']" :key="n" class="combo wide"><span class="stroke"></span><select :aria-label="n"><option></option></select><svg viewBox="0 0 10 6"><path d="M0 0l5 5l5 -5" /></svg></label>
          <label class="combo"><select aria-label="Point symbol"><option>Aut</option></select><svg viewBox="0 0 10 6"><path d="M0 0l5 5l5 -5" /></svg></label>
          <label class="combo flat off"><select aria-label="Rendering style" disabled><option>Aut</option></select><svg viewBox="0 0 10 6"><path d="M0 0l5 5l5 -5" /></svg></label>
          <label class="combo wide short"><select aria-label="Layer"><option>None</option></select><svg viewBox="0 0 10 6"><path d="M0 0l5 5l5 -5" /></svg></label>
        </div>
        <button v-for="n in ['brush', 'wand']" :key="n" class="tool" :aria-label="n"><svg viewBox="0 0 28 28" v-html="icons[n]"></svg></button>
        <div v-for="(g, i) in topGroups" :key="i" class="group" :class="g.cls">
          <i class="grip"></i>
          <button v-for="n in g.items" :key="n" class="tool" :class="{ more: n.endsWith('+') }" :aria-label="key(n)"><svg viewBox="0 0 28 28" v-html="icons[key(n)]"></svg></button>
        </div>
      </div>
      <div class="row">
        <div v-for="(g, i) in secondGroups" :key="i" class="group" :class="g.cls">
          <i class="grip"></i>
          <button v-for="n in g.items" :key="n" class="tool" :class="{ more: n.endsWith('+') }" :aria-label="key(n)"><svg viewBox="0 0 28 28" v-html="icons[key(n)]"></svg></button>
        </div>
      </div>
    </section>

    <main class="work">
      <section class="viewport">
        <svg class="model" viewBox="2 151 1871 792" preserveAspectRatio="xMidYMid meet">
          <defs>
            <linearGradient id="roll" gradientUnits="userSpaceOnUse" x1="1300" y1="358" x2="1308" y2="384"><stop offset="0" stop-color="#d0d0d0" /><stop offset=".3" stop-color="#dcdcdc" /><stop offset="1" stop-color="#808080" /></linearGradient>
            <linearGradient id="band" gradientUnits="userSpaceOnUse" x1="957" y1="640" x2="969" y2="662"><stop offset="0" stop-color="#e6e6e6" /><stop offset=".3" stop-color="#d8d8d8" /><stop offset="1" stop-color="#808080" /></linearGradient>
            <linearGradient id="side" gradientUnits="userSpaceOnUse" x1="900" y1="438" x2="916" y2="490"><stop offset="0" stop-color="#00d600" /><stop offset=".8" stop-color="#008400" /></linearGradient>
            <linearGradient id="tip" gradientUnits="userSpaceOnUse" x1="955" y1="405" x2="1000" y2="430"><stop offset="0" stop-color="#00d000" /><stop offset="1" stop-color="#008800" /></linearGradient>
            <linearGradient id="dip" gradientUnits="userSpaceOnUse" x1="815" y1="425" x2="838" y2="385"><stop offset="0" stop-color="#00d400" /><stop offset=".4" stop-color="#00d400" /><stop offset="1" stop-color="#00f400" /></linearGradient>
            <linearGradient id="shine" gradientUnits="userSpaceOnUse" x1="815" y1="765" x2="803" y2="790"><stop offset="0" stop-color="#e4e4e4" /><stop offset=".5" stop-color="#fff" /><stop offset="1" stop-color="#f0f0f0" /></linearGradient>
            <linearGradient id="shade" gradientUnits="userSpaceOnUse" x1="885" y1="780" x2="896" y2="799"><stop offset="0" stop-color="#ddd" /><stop offset="1" stop-color="#999" /></linearGradient>
            <linearGradient id="post"><stop offset="0" stop-color="#c0c0c0" /><stop offset="1" stop-color="#808080" /></linearGradient>
          </defs>
          <g stroke="#101010" stroke-width="1" stroke-linejoin="round" fill="none">
            <path fill="#00e400" d="M686 763L707 751L857 836L1004 767L974 788L852 859z" />
            <path fill="#00c000" d="M686 763L852 859Q853 882 838 883H824L717 821Q690 802 686 763z" />
            <path fill="#008400" d="M852 859L973 789L1005 767Q1001 786 975 804L843 882Q852 878 852 859zM977 787L975 803" />
            <path stroke="none" fill="#e6e6e6" d="M890 577L1337 456L1345 520L1233 590L1140 650L1004 747L991 761L857 837L707 751L795 701L785 690V645L800 628z" />
            <path d="M707 751L795 701" />
            <path fill="#c0c0c0" d="M707 751L857 837V847L707 760z" />
            <path fill="#808080" d="M857 837L991 761V771L857 847z" />
            <path fill="#c8c8c8" d="M996 743L1004 747V767L996 772L991 770V761L996 757z" />
            <path stroke="none" fill="#808080" d="M1345 455L1352 452L1519 400V440L1351 540L1265 590Q1195 632 1140 671L1004 767V747Q1090 682 1140 650L1233 590L1345 520z" />
            <path d="M997 743Q1090 674 1140 641L1215 590L1337 516L1345 520L1233 590L1140 650Q1090 682 1004 747L996 744V758L1004 763V747M1519 401V436L1518 442M1352 453V537M1517 437L1352 530M1351 536L1256 590" />
            <path fill="#c0c0c0" d="M1337 458L1345 455V520L1337 516z" />

            <path stroke="none" fill="#808080" d="M807 640L820 641L906 592V625L832 668L807 655z" />
            <path fill="#e6e6e6" stroke="none" d="M800 628L890 577L906 593L820 633z" />
            <path d="M811 627L900 583M820 633L906 592M820 641L906 598M907 625L832 668M832 678L960 605M807 637V655" />
            <path fill="#c0c0c0" d="M812 627L820 633V641L812 637z" />
            <path fill="#808080" d="M916 604L940 589V615L916 629z" />
            <path fill="#c0c0c0" d="M907 598L916 604V629L907 624z" />
            <path fill="#e6e6e6" d="M907 598L930 585L940 589L916 604z" />
            <path fill="#c0c0c0" d="M944 580L964 574L985 588V613L944 591z" />
            <path fill="#808080" d="M985 588L994 583V608L985 613z" />
            <path fill="#e6e6e6" d="M964 574L977 570L994 583L985 588z" />
            <path stroke="none" fill="#808080" d="M907 697L1116 577L1157 553V529L1172 517Q1175 533 1190 532L1199 528L1199 510L1336 458V498L1170 592L1140 611L907 748z" />
            <path d="M907 697L1116 577L1157 553V529L1172 517Q1176 533 1190 532L1199 528V520M907 742L1140 606L1336 493M1101 555L1148 529M1108 564L1148 542" />
            <path fill="#e6e6e6" d="M1176 558L1239 523V513L1336 458V478L1182 566Q1170 567 1176 558z" />
            <path d="M1173 562Q1173 552 1187 545L1239 514M1239 521L1336 467M1200 528L1325 461M1205 516L1305 468" />
            <path fill="#c0c0c0" d="M1148 524L1157 529V553L1148 548z" />
            <path fill="#e6e6e6" d="M1148 524L1168 512L1172 517L1157 529z" />
            <path fill="#aaa" d="M1188 505L1206 502Q1209 514 1201 520H1193Q1186 514 1188 505z" />
            <path fill="#eee" d="M1188 506L1204 500L1206 505L1195 511z" />
            <path d="M1063 544Q1078 555 1100 551Q1117 544 1114 528" />
            <path fill="#e6e6e6" d="M887 671L1095 551L1102 555L895 676z" />
            <path fill="url(#band)" d="M895 676L1102 555Q1116 561 1116 577L907 697Q905 682 895 676z" />
            <path fill="#c0c0c0" d="M887 671L895 676V684L887 682z" />

            <path fill="#d0d0d0" d="M785 645L791 655V697L785 690z" />
            <path fill="#e6e6e6" d="M791 655L799 650L832 668L824 673z" />
            <circle cx="792" cy="647" r="7" fill="#e6e6e6" /><circle cx="806" cy="632" r="6" fill="#c8c8c8" />
            <path fill="#c0c0c0" d="M791 655L824 673V716L791 697z" />
            <path fill="#808080" d="M824 673L832 668V711L824 716zM832 712L841 718V722L832 718z" />
            <path d="M832 703L841 708" />
            <path fill="#e6e6e6" d="M841 684Q841 678 850 680L880 697Q892 700 896 694Q904 692 907 697L900 704Q888 708 875 702z" />
            <path fill="#c0c0c0" d="M841 684L875 702V745L841 725z" />
            <path fill="url(#post)" d="M875 702Q887 708 900 704V746Q888 750 875 746z" />
            <path fill="#909090" d="M900 704L907 697V742L900 746z" />

            <path d="M803 707L744 736Q730 748 743 759L843 817Q860 824 877 818L928 788Q943 776 933 767L893 749" />
            <path stroke="none" fill="url(#shine)" d="M760 737L860 796Q855 802 853 812L748 755Q744 740 760 737z" />
            <path stroke="none" fill="url(#shade)" d="M860 796L908 767Q930 764 928 778L873 811Q868 800 860 796z" />
            <path d="M811 709L760 737L860 796L908 767L860 740M760 737Q746 740 744 758M744 740Q744 751 750 755L848 809Q860 816 873 811L924 781Q935 770 920 764L893 751M860 796Q848 800 843 817M860 796Q872 802 878 818M908 767Q920 775 928 788" />
            <g id="staple-slot">
              <path fill="#ddd" d="M781 729L796 720Q800 718 805 721L833 738Q837 742 832 745L824 750Q819 753 813 750L783 733Q780 731 781 729z" />
              <path fill="#eee" d="M789 727L798 723L829 742L820 749zM781 729L789 727M796 720L798 723M834 741L829 742M818 752L820 749" />
            </g>
            <use href="#staple-slot" x="57" y="34" />

            <path fill="#808080" d="M1586 306Q1602 308 1602 335Q1600 375 1568 401L1560 395z" />
            <path fill="#909090" d="M1519 401L1534 411L1519 420z" />
            <path fill="#808080" d="M722 450L773 516L812 503L735 445z" /><path d="M718 450L767 511L773 516" />
            <path fill="#e2e2e2" stroke="none" d="M930 368L1453 203L1460 205L935 370z" />
            <path fill="#d5d5d5" stroke="none" d="M935 369L1460 205L1576 272L1003 452L930 440z" />
            <path fill="url(#roll)" d="M1003 452L1576 272Q1588 278 1586 296L1003 478L960 484z" />
            <path fill="#808080" d="M853 522L1586 296L1568 401Q1558 412 1543 412Q1527 412 1521 400L906 594z" />
            <path stroke="none" fill="#999" d="M850 522L857 523L909 592L905 594z" />
            <path d="M857 524L909 592M850 522L906 594M935 369L1460 205M1453 203L1460 205L1576 272" />
            <g transform="rotate(22 1560 358)"><ellipse cx="1560" cy="358" rx="11" ry="17" fill="#f4f4f4" /><path d="M1552 348q-2 12 4 22M1556 343q-1 14 4 28M1564 343v12l7 4M1550 361l6 -6" /></g>

            <path fill="#00d600" stroke="none" d="M683 427Q684 401 708 400L820 362Q835 357 880 357Q930 363 962 380Q1003 412 1003 460Q997 478 971 484L849 522z" />
            <path stroke="none" fill="url(#side)" d="M824 463L846 455Q860 459 880 455Q917 450 917 438L914 433L947 424Q968 438 971 484L849 522Q851 478 824 463z" />
            <path stroke="none" fill="url(#tip)" d="M947 424Q970 415 964 396Q958 385 946 380L962 380Q1003 412 1003 460Q997 478 971 484Q971 440 947 424z" />
            <path fill="url(#dip)" d="M745 397Q742 392 752 389L797 373Q808 371 815 376L914 433Q921 441 912 449Q890 455 865 457Q855 459 846 455z" />
            <path d="M1003 460Q997 478 971 484L849 522L683 427Q684 401 708 400M722 403L745 397M824 463L846 455M708 400Q716 399 722 403L824 463Q849 477 849 522M815 376L843 365Q880 356 920 367Q964 381 965 405Q963 418 947 424L914 433M820 362Q833 360 843 366M945 380Q952 376 960 380M947 424Q968 438 971 460V484" />
          </g>
        </svg>

        <ul class="tree">
          <li class="root"><svg viewBox="0 0 30 30" v-html="rootIcon"></svg><span>Product1</span></li>
          <li v-for="p in parts" :key="p" class="node"><button aria-label="Expand"></button><svg viewBox="0 0 30 30" v-html="partIcon"></svg><span>{{ p }}</span></li>
          <li class="node"><button aria-label="Expand"></button>
            <svg viewBox="0 0 30 30"><rect x="1" y="1" width="28" height="28" fill="#3d3d5c" stroke="#ccc" stroke-dasharray="2 1" /><rect x="3" y="11" width="16" height="16" fill="#333366" stroke="#4bd" stroke-dasharray="2 1" /><path d="M3 6h16M24 11v16" stroke="#ee8" stroke-width="3" stroke-dasharray="2 1" /><path d="M20 2h8M20 4h8M20 6h8M20 8h8" stroke="#aaa" stroke-dasharray="1 1" /></svg><span>Constraints</span></li>
          <li class="last"><span>Applications</span></li>
        </ul>

        <svg class="compass" viewBox="0 0 110 160">
          <g fill="#1b4660" stroke="#dcc8fa" stroke-width="2">
            <path d="M54 23Q9 50 7 103L54 78z" /><path d="M54 23Q99 50 101 103L54 78z" />
            <path d="M54 95L7 121Q-1 133 16 143Q32 152 54 152Q76 152 92 143Q109 133 101 121z" />
            <path d="M54 8V122" stroke-width="3" />
          </g>
          <circle cx="54" cy="8" r="4" fill="#dcc8fa" /><rect x="49" y="117" width="11" height="11" fill="#d00000" />
          <g fill="#e6dc00" font-size="15"><text x="55" y="19">z</text><text x="7" y="117">x</text><text x="99" y="117">y</text></g>
        </svg>
        <svg class="axes" viewBox="0 0 60 60">
          <path d="M25 9V38L7 49M25 38L49 51" fill="none" stroke="#fff" />
          <g fill="#fff" font-size="15"><text x="24" y="11">z</text><text x="0" y="53">x</text><text x="49" y="54">y</text></g>
        </svg>
      </section>

      <aside class="sidebar">
        <div v-for="(g, i) in sideGroups" :key="i" class="side-group">
          <i class="grip"></i>
          <button v-for="n in g" :key="n" class="tool" :class="{ more: n.endsWith('+') }" :aria-label="key(n)"><svg viewBox="0 0 28 28" v-html="icons[key(n)]"></svg></button>
        </div>
      </aside>
    </main>

    <section class="bottombar">
      <div v-for="(g, i) in bottomGroups" :key="i" class="group" :class="g.cls">
        <i class="grip"></i>
        <button v-for="(n, j) in g.items" :key="j" class="tool" :class="{ more: n.endsWith('+'), narrow: n === 'link', lit: n === 'shading+' }" :aria-label="key(n)"><svg viewBox="0 0 28 28" v-html="icons[key(n)]"></svg></button>
      </div>
      <svg class="logo" viewBox="0 0 56 42">
        <path d="M11 1Q24 0 24 5Q22 10 14 13Q19 8 19 5Q19 3 11 1z" fill="#d8222c" />
        <path d="M5 14Q21 11 19 18Q15 27 1 29L8 17" fill="none" stroke="#4b2e83" stroke-width="3" />
        <path d="M32 12Q22 10 23 15Q32 20 29 24Q26 28 17 27" fill="none" stroke="#f09a1a" stroke-width="3" />
        <text x="10" y="38" font-size="13" font-weight="700" font-style="italic" fill="#4b2e83">CATIA</text>
      </svg>
    </section>

    <footer class="status">
      <span>Product1 preselected</span>
      <input type="text" aria-label="Command" />
      <button aria-label="Dialog"><svg viewBox="0 0 20 20"><path d="M2 3h10v8h-10zM18 3v14H3M14 12h3" fill="none" stroke="#999" stroke-width="2" /></svg></button>
      <button aria-label="Information"><svg viewBox="0 0 20 20"><rect x="1" y="1" width="18" height="18" fill="#bbb" stroke="#111" /><circle cx="10" cy="9" r="7" fill="#fff" stroke="#333" /><path d="M10 8v5M8 13h4M8 8h2M10 4v2" stroke="#0a7ae0" stroke-width="2" /></svg></button>
    </footer>
  </div>
</template>

<style>
body { margin: 0; }
</style>

<style scoped>
.app { display: flex; flex-direction: column; min-height: 100vh; background: #cfcfe5; color: #1c1c28; font: 14px/20px "Noto Sans", "Open Sans", sans-serif; overflow: hidden; }
button { margin: 0; padding: 0; border: 0; background: none; color: inherit; font: inherit; }
svg { display: block; flex: none; }
.titlebar { display: flex; align-items: center; height: 29px; background: linear-gradient(90deg, #f3f3f3, #f3f3f1 30%, #ecf7ef 50%, #eff3f8 65%, #f3f3f3 80%); }
.app-icon { width: 18px; height: 18px; margin: 0 7px 0 3px; }
h1 { margin: 0; font: inherit; color: #111; }
.window-buttons { display: flex; margin-left: auto; margin-right: 2px; }
.window-buttons button { display: grid; place-items: center; width: 58px; height: 29px; }
.window-buttons svg { width: 12px; height: 12px; fill: none; stroke: #111; }
.menubar { display: flex; align-items: stretch; height: 24px; }
.doc-icon { width: 24px; height: 22px; margin: 1px 1px 0 1px; }
.menubar > button { padding-right: 30px; text-align: left; white-space: nowrap; }
.menubar > .start { padding: 0 21px 0 8px; background: #ffe3b5; }
.menubar > .vpm { padding: 0 18px 0 9px; }
u { text-underline-offset: 2px; }
.doc-buttons { display: flex; gap: 4px; margin: 2px 1px 1px auto; }
.doc-buttons button { display: grid; place-items: center; width: 20px; background: #fff; }
.doc-buttons svg { width: 12px; height: 12px; fill: none; stroke: #8090a4; stroke-width: 1; }
.toolbars { padding-top: 4px; height: 91px; background: linear-gradient(#fff 0, #dedeed 6px, #cfcfe5 12px, #cfcfe5 82px, #b4b4ca 90px, #9696ac 95px); border-bottom: 1px solid #55555c; }
.row { display: flex; align-items: flex-start; height: 50px; }
.grip { flex: none; width: 1px; height: 19px; border-left: 1px solid #fff; border-right: 1px solid #a2a2b4; background: #ececf6; margin-right: 8px; }
.row > .grip { margin: 0 10px 0 8px; }
.group { display: flex; align-items: flex-start; margin-left: 13px; }
.lead { margin-left: 90px; }
.constraints { margin-left: 107px; }
.workbenches { margin-left: 335px; }
.workbenches .tool { width: 38px; }
.simulate { margin-left: 488px; }
.structure { margin-left: 138px; }
.first { margin-left: 8px; }
.loose { margin-left: 16px; }
.far { margin-left: 30px; }
.tool { position: relative; flex: none; display: flex; justify-content: center; width: 35px; height: 33px; margin-top: 6px; font-family: "Liberation Sans", sans-serif; }
.tool svg { width: 28px; height: 28px; overflow: visible; filter: drop-shadow(2px 2px 0 rgba(150, 150, 165, .3)); }
.more { margin-right: 2px; }
.more::after { content: ""; position: absolute; right: -2px; bottom: 0; border: 5px solid transparent; border-top: 6px solid #000; border-bottom: 0; }
.lit::after { outline: 1px solid #fff; }
.narrow { width: 28px; }
.combos { display: flex; gap: 4px; margin: 6px 0 0; }
.combo { position: relative; display: flex; align-items: center; width: 51px; height: 30px; box-sizing: border-box; background: #fff; border: 1px solid #8c8c98; border-bottom: 0; border-radius: 2px 2px 0 0; }
.combo.wide { width: 80px; }
.combo.flat { height: 28px; border-color: #fff; }
.combo.short { height: 28px; border-bottom: 1px solid #8c8c98; border-radius: 3px; }
.combo select { appearance: none; width: 100%; height: 24px; padding: 0 0 0 5px; border: 0; background: none; color: #1c1c28; font: inherit; opacity: 1; }
.combo.short select, .combo.flat.wide select { padding-left: 3px; }
.combo svg { position: absolute; right: 5px; top: 12px; width: 10px; height: 6px; fill: none; stroke: #777; pointer-events: none; }
.combo.off select { color: #999; }
.off svg { stroke: #c4c4c4; }
.swatch { position: absolute; left: 7px; top: 5px; width: 39px; height: 18px; background: #0080ff; border: solid; border-width: 1px; border-color: #555 #ddd #ddd #555; }
.stroke { position: absolute; left: 9px; top: 14px; width: 46px; height: 1px; background: #111; }
.work { flex: 1; display: flex; min-height: 600px; }
.viewport { position: relative; flex: 1; border: 2px solid #85858a; border-right-width: 0; border-left-color: #8a8a92; border-bottom: 0; background: linear-gradient(#343466, #444473 67%, #77779a 84%, #acacc2); color: #fff; }
.model { position: absolute; inset: 0; width: 100%; height: 100%; }
.tree { position: relative; margin: 0; padding: 4px 0 0 2px; list-style: none; font-size: 16px; line-height: 26px; width: 240px; }
.tree::before { content: ""; position: absolute; left: 10px; top: 31px; width: 2px; height: 282px; background: #f4f4f8; }
.tree li { position: relative; display: flex; align-items: center; height: 36px; }
.tree span { padding: 0 2px; border-radius: 3px; background: #333361; color: #f4f4fa; }
.tree svg { width: 30px; height: 30px; }
.tree .root { height: 34px; margin-bottom: 3px; }
.root svg { margin-right: 2px; }
.tree .root span { background: #ff8000; }
.node button { width: 16px; height: 16px; margin: -6px 8px 0 1px; border-radius: 50%; background: linear-gradient(#111, #111) center / 12px 3px no-repeat, linear-gradient(#111, #111) center / 3px 12px no-repeat, radial-gradient(circle at 50% 30%, #b4b4b4, #707070); }
.node::before { content: ""; position: absolute; left: 16px; top: 15px; width: 9px; height: 2px; background: #f4f4f8; }
.node span { margin-left: 2px; }
.last::before { content: ""; position: absolute; left: 8px; top: 17px; width: 16px; height: 2px; background: #f4f4f8; }
.tree .last { padding-left: 23px; height: 40px; }
.compass, .axes { position: absolute; font-family: "Open Sans", sans-serif; overflow: visible; }
.compass { right: 100px; top: 33px; width: 110px; height: 160px; }
.axes { right: 16px; bottom: 22px; width: 60px; height: 60px; }
.sidebar { width: 46px; padding-top: 8px; box-sizing: border-box; background: linear-gradient(90deg, #fff 0, #fbfbfe 4px, #cfcfe5 13px, #cfcfe5 36px, #b4b4ca 42px, #a0a0b6); }
.side-group { display: flex; flex-direction: column; margin-bottom: 11px; }
.side-group .grip { width: 19px; height: 1px; margin: 0 0 8px 6px; border: 0; border-top: 1px solid #fff; border-bottom: 1px solid #a2a2b4; }
.side-group .tool { width: 46px; height: 35px; margin: 0; padding-left: 2px; box-sizing: border-box; align-items: center; }
.side-group .more { margin-bottom: 2px; }
.side-group .more::after { right: 1px; bottom: -2px; }
.bottombar { display: flex; align-items: flex-start; height: 40px; padding-top: 6px; background: linear-gradient(#fff 0, #f4f4fb 5px, #cfcfe5 16px, #cfcfe5 26px, #9a9ab0 46px); border-bottom: 1px solid #55555c; }
.bottombar .tool { margin-top: 5px; }
.logo { width: 56px; height: 42px; margin: -5px 2px 0 auto; font-family: "Open Sans", sans-serif; overflow: visible; }
.status { display: flex; align-items: stretch; height: 26px; font-family: "Open Sans", sans-serif; line-height: 28px; }
.status span { padding-left: 4px; }
.status input { width: 374px; box-sizing: border-box; margin: 2px 1px 0 auto; border: 0; background: #fff; }
.status button { display: grid; place-items: center; width: 41px; margin-top: 2px; box-sizing: border-box; border: 1px solid #fff; border-right: 2px solid #85858f; border-bottom: 0; }
.status button + button { margin-left: 1px; }
.status svg { width: 20px; height: 20px; }
</style>
